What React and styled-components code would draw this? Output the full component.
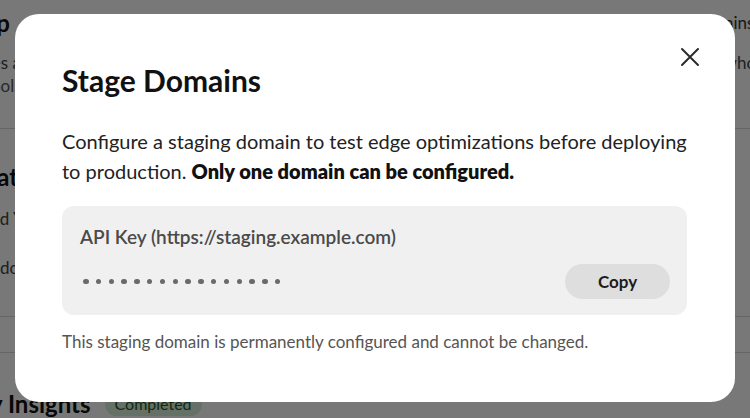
import React from 'react';
import styled, { createGlobalStyle } from 'styled-components';

const GlobalStyle = createGlobalStyle`
  html, body {
    margin   : 0;
    padding  : 0;
    overflow : hidden;
  }
  body {
    font-family : Lato, "Noto Sans", sans-serif;
    background  : #ffffff;
    color       : #1f1f1f;
  }
`;

const CloseIcon = () => (
  <svg width="20" height="20" viewBox="0 0 20 20" fill="none">
    <path d="M2 2 L18 18 M18 2 L2 18" stroke="#2b2b2b" strokeWidth="2" strokeLinecap="round" />
  </svg>
);

const App = () => {
  const dots = Array.from({ length: 16 });

  return (
    <>
      <GlobalStyle />
      <Page>
        <Section $top={8} $bottom={31}>
          <HeadRow>
            <Heading $indent={-52}>Setup</Heading>
            <Lead>Use these rules to decide how cached content is handled by the edge for each of your domains.</Lead>
          </HeadRow>
          <Description $indent={-32} $spaced={13}>
            Rules apply to all requests across your domains and reduce origin load for every page you serve in the whole process.
          </Description>
          <Description $indent={-17} $spaced={0} $muted>
            Tools and controls are only available to people with the admin role on this account.
          </Description>
        </Section>

        <Section $top={33} $bottom={37}>
          <Heading $indent={-58}>Format</Heading>
          <Description $indent={-21} $spaced={15}>Add Your domain to begin collecting metrics.</Description>
          <Description $indent={0} $spaced={26}>docs and guides</Description>
        </Section>

        <Section $top={0} $bottom={0}>
          <SubRow />
        </Section>

        <Section $top={36} $bottom={0} $last>
          <InsightsRow>
            <Heading $indent={-87}>Delivery Insights</Heading>
            <Badge>Completed</Badge>
          </InsightsRow>
        </Section>
      </Page>

      <Overlay>
        <Modal role="dialog" aria-labelledby="stage-domains-title">
          <CloseButton aria-label="Close">
            <CloseIcon />
          </CloseButton>

          <Title id="stage-domains-title">Stage Domains</Title>

          <Intro>
            Configure a staging domain to test edge optimizations before deploying to production.{' '}
            <strong>Only one domain can be configured.</strong>
          </Intro>

          <KeyCard>
            <KeyLabel>API Key (https://staging.example.com)</KeyLabel>
            <KeyRow>
              <Dots aria-label="Hidden key">
                {dots.map((_, i) => <Dot key={i} />)}
              </Dots>
              <CopyButton>Copy</CopyButton>
            </KeyRow>
          </KeyCard>

          <Note>This staging domain is permanently configured and cannot be changed.</Note>
        </Modal>
      </Overlay>
    </>
  );
};

const Page = styled.div`
  width          : 900px;
  display        : flex;
  flex-direction : column;
`;

const Section = styled.section`
  padding        : ${({ $top }) => $top}px 0 ${({ $bottom }) => $bottom}px;
  border-bottom  : ${({ $last }) => ($last ? 'none' : '1px solid #d6d6d6')};
  display        : flex;
  flex-direction : column;
`;

const HeadRow = styled.div`
  display     : flex;
  align-items : flex-start;
  gap         : 42px;
`;

const Heading = styled.h2`
  margin      : 0 0 0 ${({ $indent = 0 }) => $indent}px;
  font-size   : 24px;
  font-weight : 700;
  color       : #111;
  line-height : 30px;
  white-space : nowrap;
`;

const Lead = styled.p`
  margin      : 5px 0 0;
  font-size   : 17px;
  line-height : 20px;
  color       : #333;
  white-space : nowrap;
`;

const Description = styled.p`
  margin      : ${({ $spaced = 10 }) => $spaced}px 0 0 ${({ $indent = 0 }) => $indent}px;
  font-size   : 17px;
  line-height : 23px;
  color       : ${({ $muted }) => ($muted ? '#555' : '#444')};
  white-space : nowrap;
`;

const SubRow = styled.div`
  height : 35px;
`;

const InsightsRow = styled.div`
  display     : flex;
  align-items : center;
  gap         : 14px;
`;

const Badge = styled.span`
  padding       : 1px 10px 3px;
  border-radius : 999px;
  background    : #d7efd9;
  color         : #1f5a2a;
  font-size     : 16px;
`;

const Overlay = styled.div`
  position        : fixed;
  inset           : 0;
  background      : rgba(0, 0, 0, 0.53);
  display         : flex;
  align-items     : center;
  justify-content : center;
`;

const Modal = styled.div`
  position       : relative;
  box-sizing     : border-box;
  width          : 720px;
  height         : 388px;
  margin-top     : -2px;
  padding        : 48px 48px 0 47px;
  background     : #ffffff;
  border-radius  : 24px;
  display        : flex;
  flex-direction : column;
`;

const CloseButton = styled.button`
  position        : absolute;
  top             : 27px;
  right           : 29px;
  width           : 32px;
  height          : 32px;
  padding         : 0;
  border          : none;
  background      : transparent;
  display         : flex;
  align-items     : center;
  justify-content : center;
  cursor          : pointer;
`;

const Title = styled.h1`
  margin      : 0;
  font-size   : 30px;
  font-weight : 700;
  line-height : 36px;
  color       : #111;
`;

const Intro = styled.p`
  margin      : 28px 0 0;
  font-size   : 20px;
  line-height : 30px;
  color       : #222;

  strong {
    font-weight : 800;
    color       : #111;
  }
`;

const KeyCard = styled.div`
  margin         : 20px 0 0;
  padding        : 20px 17px 16px 18px;
  background     : #f0f0f0;
  border-radius  : 12px;
  display        : flex;
  flex-direction : column;
  gap            : 16px;
`;

const KeyLabel = styled.div`
  font-size   : 19px;
  font-weight : 600;
  line-height : 22px;
  color       : #4a4a4a;
`;

const KeyRow = styled.div`
  display         : flex;
  align-items     : center;
  justify-content : space-between;
`;

const Dots = styled.div`
  display      : flex;
  gap          : 7.3px;
  padding-left : 3px;
`;

const Dot = styled.span`
  width         : 5.5px;
  height        : 5.5px;
  border-radius : 50%;
  background    : #6a6a6a;
`;

const CopyButton = styled.button`
  width         : 105px;
  height        : 35px;
  border        : none;
  border-radius : 999px;
  background    : #dedede;
  font-family   : inherit;
  font-size     : 17px;
  font-weight   : 700;
  color         : #1c1c1c;
  cursor        : pointer;
`;

const Note = styled.p`
  margin      : 16px 0 0;
  font-size   : 17px;
  line-height : 22px;
  color       : #555;
`;

export default App;
